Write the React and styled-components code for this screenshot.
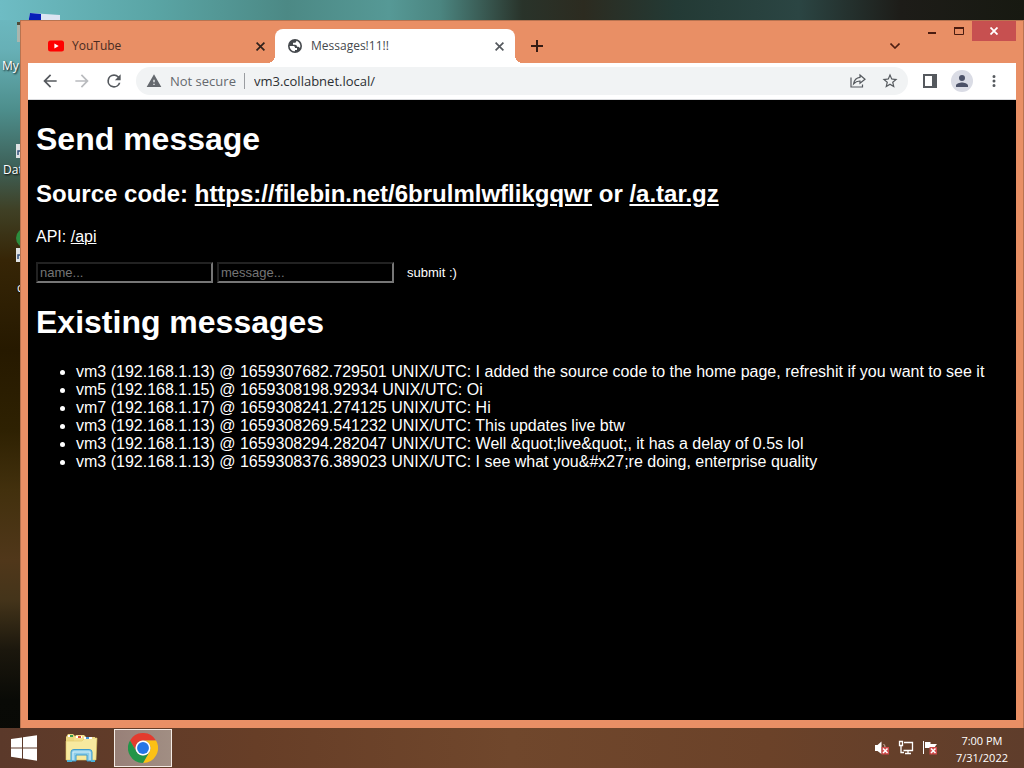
import React from "react";
import styled, { createGlobalStyle } from "styled-components";

const GlobalStyle = createGlobalStyle`
  * { box-sizing: border-box; }
  html, body { margin: 0; }
  button { border: 0; padding: 0; background: none; font: inherit; color: inherit; }
  svg { display: block; }
`;

const uiFont = `"Open Sans", "Noto Sans", sans-serif`;
const frame = "#e98f65";

const Desktop = styled.div`
  position: relative;
  min-height: 100vh;
  display: flex;
  flex-direction: column;
  overflow: hidden;
  font-family: ${uiFont};
  background:
    linear-gradient(90deg, #6ebcc4 0%, #5aa5a5 15%, #4c8985 28%, #569996 38%, #4b8580 43%, #29332a 51%, #2c2b20 57%, #233a35 66%, #2b4543 78%, #1d1c18 88%, #171911 100%) top / 100% 20px no-repeat,
    linear-gradient(#6ebcc4 0, #67b0b6 50px, #4d8e8c 110px, #3e625a 165px, #3f4025 210px, #362506 260px, #261900 350px, #2e2102 430px, #42300d 490px, #50371a 560px, #44341a 600px, #1b170d 650px, #090a06 700px, #080905 100%);
`;

const DesktopIcons = styled.div`
  position: absolute;
  left: 0;
  top: 0;
  width: 64px;
  height: 300px;
`;

const IconLabel = styled.span`
  position: absolute;
  left: ${(p) => p.$x}px;
  top: ${(p) => p.$y}px;
  color: #fff;
  font-size: 12px;
  line-height: 16px;
  text-shadow: 1px 1px 2px #000;
`;

const Window = styled.main`
  position: relative;
  flex: 1;
  display: flex;
  flex-direction: column;
  margin: 20px 0 0 20px;
  padding: 0 8px 8px;
  background: ${frame};
  box-shadow: inset 1px 1px #b87350, inset -1px 0 #b87350;
`;

const TitleBar = styled.header`
  display: flex;
  height: 43px;
  align-items: flex-end;
`;

const Tab = styled.div`
  position: relative;
  display: flex;
  align-items: center;
  flex: 0 1 ${(p) => (p.$active ? 240 : 247)}px;
  height: 34px;
  padding: 0 10px 0 ${(p) => (p.$active ? 12 : 20)}px;
  border-radius: 8px 8px 0 0;
  background: ${(p) => (p.$active ? "#fff" : "transparent")};
  color: ${(p) => (p.$active ? "#45494d" : "#482b22")};
  font-size: 12px;
  line-height: 16px;
  ${(p) =>
    p.$active &&
    `&::before, &::after {
      content: "";
      position: absolute;
      bottom: 0;
      width: 8px;
      height: 8px;
    }
    &::before { left: -8px; background: radial-gradient(circle at 0 0, transparent 8px, #fff 8px); }
    &::after { right: -8px; background: radial-gradient(circle at 100% 0, transparent 8px, #fff 8px); }`}
`;

const TabTitle = styled.span`
  flex: 1;
  margin-left: 8px;
`;

const IconButton = styled.button`
  display: grid;
  place-items: center;
  flex: none;
  width: ${(p) => p.$w || 32}px;
  height: ${(p) => p.$h || 32}px;
  color: ${(p) => p.$color || "#55595e"};
`;

const NewTab = styled(IconButton)`
  margin-left: 6px;
  color: #351b13;
`;

const TabSearch = styled(IconButton)`
  margin-left: auto;
  color: #4d1f12;
`;

const Caption = styled.div`
  display: flex;
  align-self: flex-start;
  margin-left: 8px;
  padding-top: 1px;
`;

const CaptionButton = styled(IconButton)`
  color: ${(p) => (p.$close ? "#fff" : "#4a1c10")};
  background: ${(p) => (p.$close ? "#c75050" : "transparent")};
`;

const Toolbar = styled.nav`
  display: flex;
  align-items: center;
  height: 37px;
  padding: 0 6px;
  background: #fff;
  border-bottom: 1px solid #d9dadd;
`;

const AddressBar = styled.div`
  display: flex;
  align-items: center;
  flex: 1;
  min-width: 0;
  height: 28px;
  margin: 0 6px;
  padding: 0 2px 0 10px;
  border-radius: 14px;
  background: #f1f3f4;
  color: #65696e;
  font-size: 13px;
  line-height: 20px;
`;

const Security = styled.span`
  margin: 0 8px;
  font-size: 13px;
  white-space: nowrap;
`;

const Divider = styled.span`
  width: 1px;
  height: 16px;
  margin-right: 6px;
  background: #9a9da1;
`;

const Address = styled.input`
  flex: 1;
  min-width: 0;
  border: 0;
  padding: 0 3px;
  outline: 0;
  background: transparent;
  color: #2c2f33;
  font: 13px/20px ${uiFont};
`;

const Avatar = styled.span`
  display: grid;
  place-items: center;
  width: 22px;
  height: 22px;
  border-radius: 50%;
  background: #dadce5;
`;

const Page = styled.section`
  flex: 1;
  padding: 21px 8px;
  background: #000;
  color: #fff;
  font: 16px/18px "Liberation Sans", Arial, sans-serif;
`;

const Heading = styled.h1`
  margin: 0 0 22px;
  font-size: 32px;
  line-height: 37px;
`;

const SubHeading = styled.h2`
  margin: 0 0 21px;
  font-size: 24px;
  line-height: 27px;
`;

const Paragraph = styled.p`
  margin: 0 0 16px;
`;

const Link = styled.a`
  color: inherit;
`;

const MessageForm = styled.form`
  display: flex;
  gap: 4px;
  margin-bottom: 21px;
`;

const TextField = styled.input`
  width: 177px;
  height: 21px;
  padding: 1px 2px;
  border: 2px solid;
  border-color: #222 #767676 #767676 #222;
  background: #000;
  color: #fff;
  font: 13px "Liberation Sans", Arial, sans-serif;
  &::placeholder { color: #757575; }
`;

const Submit = styled.button`
  height: 21px;
  margin-left: 3px;
  padding: 0 6px;
  color: #fff;
  font: 13px "Liberation Sans", Arial, sans-serif;
`;

const MessageList = styled.ul`
  margin: 0;
  padding-left: 40px;
`;

const Taskbar = styled.footer`
  position: relative;
  display: flex;
  align-items: center;
  height: 40px;
  padding-right: 16px;
  color: #fff;
  background: linear-gradient(90deg, #5b392a, #673e27 25%, #70472c 50%, #6b4229 75%, #5f3d2b);
`;

const TaskButton = styled.button`
  display: grid;
  place-items: center;
  width: ${(p) => p.$w}px;
  height: 38px;
  margin-right: ${(p) => p.$gap || 0}px;
  border: ${(p) => (p.$active ? "1px solid #f4ebe5" : "0")};
  background: ${(p) => (p.$active ? "linear-gradient(90deg, #988078, #a18e83)" : "none")};
`;

const Tray = styled.div`
  display: flex;
  align-items: center;
  margin-left: auto;
`;

const Clock = styled.time`
  margin-left: 14px;
  padding-top: 2px;
  font-size: 11px;
  line-height: 17px;
  text-align: center;
`;

const Svg = ({ w = 16, h = w, box = `0 0 ${w} ${h}`, children, ...rest }) => (
  <svg width={w} height={h} viewBox={box} fill="none" aria-hidden="true" {...rest}>
    {children}
  </svg>
);

const Material = ({ d, size = 18 }) => (
  <Svg w={size} box="0 0 24 24">
    <path fill="currentColor" fillRule="evenodd" d={d} />
  </Svg>
);

const CloseIcon = ({ size = 9, width = 1.5 }) => (
  <Svg w={size} box="0 0 8 8">
    <path d="M0.5 0.5L7.5 7.5M7.5 0.5L0.5 7.5" stroke="currentColor" strokeWidth={width} />
  </Svg>
);

const paths = {
  back: "M20 11H7.83l5.59-5.59L12 4l-8 8 8 8 1.41-1.41L7.83 13H20z",
  forward: "M12 4l-1.41 1.41L16.17 11H4v2h12.17l-5.58 5.59L12 20l8-8z",
  reload: "M17.65 6.35A7.96 7.96 0 0 0 12 4a8 8 0 1 0 7.73 10h-2.08A6 6 0 1 1 12 6c1.66 0 3.14.69 4.22 1.78L13 11h7V4z",
  warning: "M1 21h22L12 2zm12-3h-2v-2h2zm0-4h-2v-4h2z",
  globe: "M12 1.5a10.5 10.5 0 1 0 0 21 10.5 10.5 0 0 0 0-21zM4 12h5c2 0 3 1 3 3h3v3h-3v2C7.500 20 4 16.500 4 12zM14 4.300c3.500 1 6 4 6 7.700 0 1-.2 2-.6 3-1-1.500-2-2-3.400-2h-1c0-2-1-3-3-3H9V7h3c1.500 0 2-1 2-2.700z",
  star: "M22 9.24l-7.19-.62L12 2 9.19 8.63 2 9.24l5.46 4.73L5.82 21 12 17.27 18.18 21l-1.63-7.03zM12 15.4l-3.76 2.27 1-4.28-3.32-2.88 4.38-.38L12 6.1l1.71 4.04 4.38.38-3.32 2.88 1 4.28z",
  person: "M12 12a4 4 0 1 0 0-8 4 4 0 0 0 0 8zm0 2c-2.67 0-8 1.34-8 4v2h16v-2c0-2.66-5.33-4-8-4z",
  more: "M12 8a2 2 0 1 0 0-4 2 2 0 0 0 0 4zm0 2a2 2 0 1 0 0 4 2 2 0 0 0 0-4zm0 6a2 2 0 1 0 0 4 2 2 0 0 0 0-4z",
};

const YouTubeIcon = () => (
  <Svg w={16} h={12}>
    <rect y="0.5" width="16" height="11" rx="2.5" fill="#f00" />
    <path d="M6.4 3.6L10.7 6L6.4 8.4Z" fill="#fff" />
  </Svg>
);

const ShareIcon = () => (
  <Svg w={16} h={16} stroke="currentColor" strokeWidth="1.2">
    <path d="M1 4.5V14H12.5V11.5" />
    <path d="M10 2L15 6.2L10 10.3V8C7.2 7.9 5.4 8.8 3.6 10.8C4.2 7.3 6.5 4.8 10 4.4Z" />
  </Svg>
);

const PanelIcon = () => (
  <Svg w={14} h={14}>
    <path d="M1 1H13V13H1Z" stroke="currentColor" strokeWidth="2" />
    <path d="M9 1H13V13H9Z" fill="currentColor" />
  </Svg>
);

const WindowsLogo = () => (
  <Svg w={26} h={26}>
    <path fill="#fff" d="M0 4L11 2.4V12.4H0ZM12 2.3L26 0.3V12.4H12ZM0 13.4H11V23.4L0 21.8ZM12 13.4H26V25.7L12 23.6Z" />
  </Svg>
);

const ExplorerIcon = () => (
  <Svg w={34} h={32}>
    <path d="M2 5L4 2H9L11 4H18V26H2Z" fill="#ecd67e" />
    <path d="M4 3H8V5H4Z" fill="#fff" />
    <path d="M6 3H9V5H6Z" fill="#3a9b52" />
    <path d="M10 6L12 3H20L22 5H31V27H10Z" fill="#f3de8c" />
    <path d="M12 4H18V6H12Z" fill="#fff" />
    <path d="M14 4H17V6H14Z" fill="#d64b36" />
    <path d="M2 9H18L21 6H33L32 28H2Z" fill="#f7e99f" stroke="#e0c765" strokeWidth="0.6" />
    <path d="M20 5H28V7H20Z" fill="#fff" />
    <path d="M22 5H25V7H22Z" fill="#4796d5" />
    <path d="M7 29V20Q7 17.5 10 17.5H25Q28 17.5 28 20V29H23V23H12V29Z" fill="#8acce9" stroke="#3f9ccc" />
    <path d="M9 28V20H26V28" stroke="#d8f1fa" />
    <path d="M3 29H8M27 29H31" stroke="#4eb1d6" strokeWidth="2" />
  </Svg>
);

const ChromeLogo = () => (
  <Svg w={30} box="0 0 48 48">
    <path fill="#e33b2e" d="M3.2 12A24 24 0 0 1 44.8 12H24A12 12 0 0 0 13.6 30Z" />
    <path fill="#fbc116" d="M44.8 12A24 24 0 0 1 24 48L34.4 30A12 12 0 0 0 24 12Z" />
    <path fill="#229548" d="M24 48A24 24 0 0 1 3.2 12L13.6 30A12 12 0 0 0 34.4 30Z" />
    <circle cx="24" cy="24" r="12" fill="#fff" />
    <circle cx="24" cy="24" r="9.5" fill="#2575e6" />
  </Svg>
);

const RedCross = () => (
  <g>
    <path d="M7.500 7H15V14.500H7.500Z" fill="#cf4a4a" />
    <path d="M9 8.500L13.500 13M13.500 8.500L9 13" stroke="#fff" strokeWidth="1.500" />
  </g>
);

const SoundIcon = () => (
  <Svg w={16}>
    <path d="M1 5H3.500L7.500 1.500V14L3.500 11H1Z" fill="#fff" />
    <path d="M9.500 4Q11 5 11 7" stroke="#d8beb0" />
    <RedCross />
  </Svg>
);

const NetworkIcon = () => (
  <Svg w={16} stroke="#fff">
    <path d="M6 2.5H14.5V10.5H5.5M7 13.500H13M10 11V13" strokeWidth="1.300" />
    <path d="M1.5 1.5H4.5V5.5H1.5ZM3 6V12.5H6" strokeWidth="1.300" />
  </Svg>
);

const FlagIcon = () => (
  <Svg w={16}>
    <path d="M1.500 1V14" stroke="#fff" />
    <path d="M3 2H8.500V4H15L13 6.500L15 9H9V8H3Z" fill="#fff" />
    <RedCross />
  </Svg>
);

const DesktopShortcuts = () => (
  <DesktopIcons>
    <Svg w={64} h={300}>
      <path d="M30 13L60 15V24H28Z" fill="#dce4f2" />
      <path d="M30 13L41 14V24H28Z" fill="#0720b8" />
      <path d="M17 23H24V42H17Z" fill="#a9b6ae" />
      <path d="M17 22H24V25H17Z" fill="#514b38" />
      <circle cx="26" cy="238" r="10" fill="#2c8c3d" />
      <path d="M16 144H24V158H16ZM16 248H24V262H16Z" fill="#dfe2e4" />
      <path d="M18 155V151H22M18 259V255H22" stroke="#35517c" strokeWidth="1.5" />
    </Svg>
    <IconLabel $x={2} $y={58}>My</IconLabel>
    <IconLabel $x={3} $y={162}>Dat</IconLabel>
    <IconLabel $x={17} $y={280}>c</IconLabel>
  </DesktopIcons>
);

const messages = [
  "vm3 (192.168.1.13) @ 1659307682.729501 UNIX/UTC: I added the source code to the home page, refreshit if you want to see it",
  "vm5 (192.168.1.15) @ 1659308198.92934 UNIX/UTC: Oi",
  "vm7 (192.168.1.17) @ 1659308241.274125 UNIX/UTC: Hi",
  "vm3 (192.168.1.13) @ 1659308269.541232 UNIX/UTC: This updates live btw",
  "vm3 (192.168.1.13) @ 1659308294.282047 UNIX/UTC: Well &quot;live&quot;, it has a delay of 0.5s lol",
  "vm3 (192.168.1.13) @ 1659308376.389023 UNIX/UTC: I see what you&#x27;re doing, enterprise quality",
];

export default function App() {
  return (
    <Desktop>
      <GlobalStyle />
      <DesktopShortcuts />
      <Window>
        <TitleBar>
          <Tab>
            <YouTubeIcon />
            <TabTitle>YouTube</TabTitle>
            <IconButton $w={10} $h={16} $color="#30211c" aria-label="Close YouTube tab"><CloseIcon /></IconButton>
          </Tab>
          <Tab $active>
            <Material d={paths.globe} size={16} />
            <TabTitle>Messages!11!!</TabTitle>
            <IconButton $w={12} $h={16} aria-label="Close Messages tab"><CloseIcon /></IconButton>
          </Tab>
          <NewTab $h={34} aria-label="New tab">
            <Svg w={12}><path d="M6 0V12M0 6H12" stroke="currentColor" strokeWidth="2" /></Svg>
          </NewTab>
          <TabSearch $h={34} aria-label="Search tabs">
            <Svg w={10} h={6}><path d="M0.5 0.5L5 5L9.5 0.5" stroke="currentColor" strokeWidth="1.6" /></Svg>
          </TabSearch>
          <Caption>
            <CaptionButton $w={26} $h={20} aria-label="Minimize">
              <Svg w={8} h={8}><path d="M0 6H8" stroke="currentColor" strokeWidth="2" /></Svg>
            </CaptionButton>
            <CaptionButton $w={27} $h={20} aria-label="Maximize">
              <Svg w={10} h={8}><path d="M0.5 1V7.5H9.5V1" stroke="currentColor" /><path d="M0 1H10" stroke="currentColor" strokeWidth="2" /></Svg>
            </CaptionButton>
            <CaptionButton $w={44} $h={20} $close aria-label="Close window"><CloseIcon size={8} width={1.8} /></CaptionButton>
          </Caption>
        </TitleBar>
        <Toolbar>
          <IconButton aria-label="Back"><Material d={paths.back} size={20} /></IconButton>
          <IconButton aria-label="Forward" $color="#b9bbbe"><Material d={paths.forward} size={20} /></IconButton>
          <IconButton aria-label="Reload"><Material d={paths.reload} size={20} /></IconButton>
          <AddressBar>
            <Material d={paths.warning} size={16} />
            <Security>Not secure</Security>
            <Divider />
            <Address aria-label="Address" defaultValue="vm3.collabnet.local/" />
            <IconButton aria-label="Share"><ShareIcon /></IconButton>
            <IconButton aria-label="Bookmark"><Material d={paths.star} size={18} /></IconButton>
          </AddressBar>
          <IconButton aria-label="Side panel"><PanelIcon /></IconButton>
          <IconButton aria-label="Profile" $color="#4c5268"><Avatar><Material d={paths.person} size={18} /></Avatar></IconButton>
          <IconButton aria-label="Menu"><Material d={paths.more} size={18} /></IconButton>
        </Toolbar>
        <Page>
          <Heading>Send message</Heading>
          <SubHeading>
            Source code: <Link href="#filebin">https://filebin.net/6brulmlwflikgqwr</Link> or <Link href="#archive">/a.tar.gz</Link>
          </SubHeading>
          <Paragraph>API: <Link href="#api">/api</Link></Paragraph>
          <MessageForm onSubmit={(e) => e.preventDefault()}>
            <TextField aria-label="Name" placeholder="name..." />
            <TextField aria-label="Message" placeholder="message..." />
            <Submit type="submit">submit :)</Submit>
          </MessageForm>
          <Heading>Existing messages</Heading>
          <MessageList>
            {messages.map((m) => <li key={m}>{m}</li>)}
          </MessageList>
        </Page>
      </Window>
      <Taskbar>
        <TaskButton $w={48} $gap={8} aria-label="Start"><WindowsLogo /></TaskButton>
        <TaskButton $w={50} $gap={8} aria-label="File Explorer"><ExplorerIcon /></TaskButton>
        <TaskButton $w={58} $active aria-label="Google Chrome"><ChromeLogo /></TaskButton>
        <Tray>
          <IconButton $w={24} aria-label="Volume"><SoundIcon /></IconButton>
          <IconButton $w={24} aria-label="Network"><NetworkIcon /></IconButton>
          <IconButton $w={24} aria-label="Notifications"><FlagIcon /></IconButton>
          <Clock>7:00 PM<br />7/31/2022</Clock>
        </Tray>
      </Taskbar>
    </Desktop>
  );
}
